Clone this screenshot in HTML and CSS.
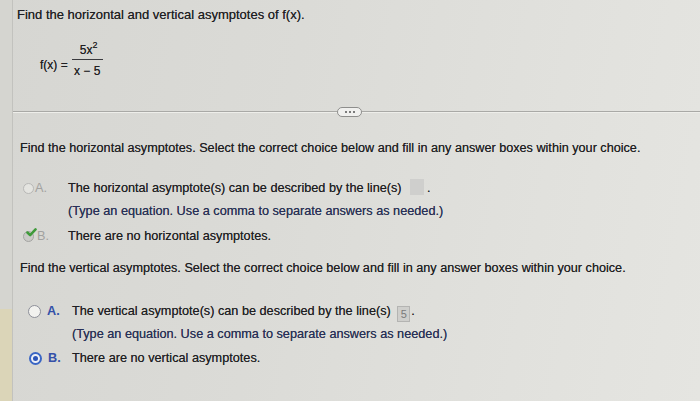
FILE: index.html
```html
<!DOCTYPE html>
<html>
<head>
<meta charset="utf-8">
<link rel="stylesheet" href="styles.css">
</head>
<body>
<div class="page">
  <div class="edge"><div class="edge-patch"></div></div>
  <div class="main">
    <div class="top">
      <p class="title">Find the horizontal and vertical asymptotes of f(x).</p>
      <div class="formula">
        <span class="fx">f(x) =</span>
        <span class="frac">
          <span class="num">5x<sup>2</sup></span>
          <span class="den">x − 5</span>
        </span>
      </div>
    </div>
    <div class="divider">
      <span class="rule"></span>
      <span class="pill"><i></i><i></i><i></i></span>
      <span class="rule"></span>
    </div>
    <p class="q q1">Find the horizontal asymptotes. Select the correct choice below and fill in any answer boxes within your choice.</p>
    <div class="choices faded">
      <div class="choice">
        <span class="radio"></span>
        <span class="letter">A.</span>
        <div class="ctext">
          <div>The horizontal asymptote(s) can be described by the line(s) <span class="box empty"></span>.</div>
          <div class="hint">(Type an equation. Use a comma to separate answers as needed.)</div>
        </div>
      </div>
      <div class="choice">
        <span class="radio checked-g">
          <svg class="tick" viewBox="0 0 12 10" width="11" height="9"><path d="M1.5 5 L4.5 8 L10.5 1.5" fill="none" stroke="#3f9a3a" stroke-width="2.8" stroke-linecap="round" stroke-linejoin="round"/></svg>
        </span>
        <span class="letter">B.</span>
        <div class="ctext"><div>There are no horizontal asymptotes.</div></div>
      </div>
    </div>
    <p class="q q2">Find the vertical asymptotes. Select the correct choice below and fill in any answer boxes within your choice.</p>
    <div class="choices active">
      <div class="choice">
        <span class="radio"></span>
        <span class="letter">A.</span>
        <div class="ctext">
          <div>The vertical asymptote(s) can be described by the line(s) <span class="box">5</span>.</div>
          <div class="hint">(Type an equation. Use a comma to separate answers as needed.)</div>
        </div>
      </div>
      <div class="choice">
        <span class="radio selected"></span>
        <span class="letter">B.</span>
        <div class="ctext"><div>There are no vertical asymptotes.</div></div>
      </div>
    </div>
  </div>
</div>
</body>
</html>
```

FILE: styles.css
```css
* { box-sizing: border-box; }
html, body { margin: 0; padding: 0; }
body {
  width: 700px;
  height: 401px;
  overflow: hidden;
  font-family: "Liberation Sans", Arial, sans-serif;
  color: #1f1f23;
  text-shadow: 0 0 0.4px rgba(20, 20, 25, 0.7);
  background: linear-gradient(100deg, #d6d6d2 0%, #dbdbd7 40%, #e1e1dd 75%, #e5e5e1 100%);
}
.page {
  display: flex;
  height: 401px;
}
.edge {
  width: 13px;
  flex: none;
  border-right: 1px solid #c2c2be;
  background: #d5d5d0;
  display: flex;
  flex-direction: column;
  justify-content: flex-end;
}
.edge-patch {
  height: 92px;
  background: #dbd5b8;
}
.main {
  flex: 1;
  display: flex;
  flex-direction: column;
}
.top { padding: 7px 0 0 4px; }
.title {
  margin: 0;
  font-size: 13px;
  line-height: 16px;
}
.formula {
  display: flex;
  align-items: center;
  margin: 20px 0 0 23px;
  font-size: 12px;
}
.fx { margin-right: 4px; margin-top: 7px; }
.frac {
  display: flex;
  flex-direction: column;
  align-items: center;
}
.num {
  padding: 0 0 2px 3px;
  border-bottom: 1px solid #3a3a3e;
  line-height: 14px;
  width: 31px;
  text-align: center;
}
.num sup { font-size: 9px; vertical-align: 6px; line-height: 0; }
.den { line-height: 16px; padding-top: 3px; }
.divider {
  display: flex;
  align-items: center;
  margin: 28px 0 0 0;
}
.rule {
  flex: 1;
  height: 2px;
  background: #a9a9a6;
  border-bottom: 1px solid #eeeeea;
}
.rule:first-child { flex: none; width: 324px; }
.pill {
  width: 25px;
  height: 10px;
  border: 1px solid #8e8e8c;
  border-radius: 5px;
  background: #f0f0ee;
  display: flex;
  align-items: center;
  justify-content: center;
  gap: 2px;
}
.pill i {
  width: 2px;
  height: 2px;
  background: #555;
  border-radius: 1px;
}
.q {
  margin: 0;
  font-size: 12.65px;
  line-height: 16px;
  padding-left: 7px;
}
.q1 { margin-top: 23px; }
.q2 { margin-top: 12px; }
.choice {
  display: flex;
  align-items: flex-start;
  font-size: 12.7px;
  line-height: 23px;
}
.choices {
  display: flex;
  flex-direction: column;
  gap: 2px;
}
.faded { margin-top: 21px; padding-left: 10px; }
.active { margin-top: 24px; padding-left: 15px; }
.active .choice + .choice { margin-top: -1px; }
.radio {
  position: relative;
  width: 11px;
  height: 11px;
  margin-top: 6px;
  border-radius: 50%;
  border: 1.5px solid #b8b8b6;
  background: #e4e4e0;
  flex: none;
}
.active .radio { border-color: #8d8f99; background: #f2f2ef; width: 13px; height: 13px; margin-top: 5px; }
.radio.selected {
  border: 2px solid #3a66c4;
  background: #eef0f6;
  display: flex;
  align-items: center;
  justify-content: center;
  margin-left: 1px;
}
.radio.selected::after {
  content: "";
  width: 5px;
  height: 5px;
  border-radius: 50%;
  background: #2c55b8;
}
.radio.checked-g { border-color: #a4a4a2; background: #cacac7; }
.tick {
  position: absolute;
  left: 2px;
  top: -4px;
}
.letter {
  width: 34px;
  flex: none;
  padding-left: 1px;
  color: #a2a2a0;
  text-shadow: none;
}
.choice + .choice .letter { padding-left: 3px; }
.active .letter {
  color: #3450a8;
  font-weight: bold;
  padding-left: 6px;
  width: 31px;
}
.active .choice + .choice .letter { padding-left: 6px; width: 30px; }
.ctext { display: flex; flex-direction: column; }
.hint { color: #27305a; }
.box {
  display: inline-block;
  vertical-align: -3px;
  width: 13px;
  height: 16px;
  line-height: 15px;
  text-align: center;
  font-size: 11px;
  background: #cfcfcc;
  border: 1px solid #b4b4b2;
  color: #7a7a7a;
  text-shadow: none;
  margin-left: 3px;
  margin-right: 1px;
}
.box.empty { background: #cfcfcd; border-color: #cfcfcd; width: 14px; margin-left: 5px; margin-right: 3px; }
```
